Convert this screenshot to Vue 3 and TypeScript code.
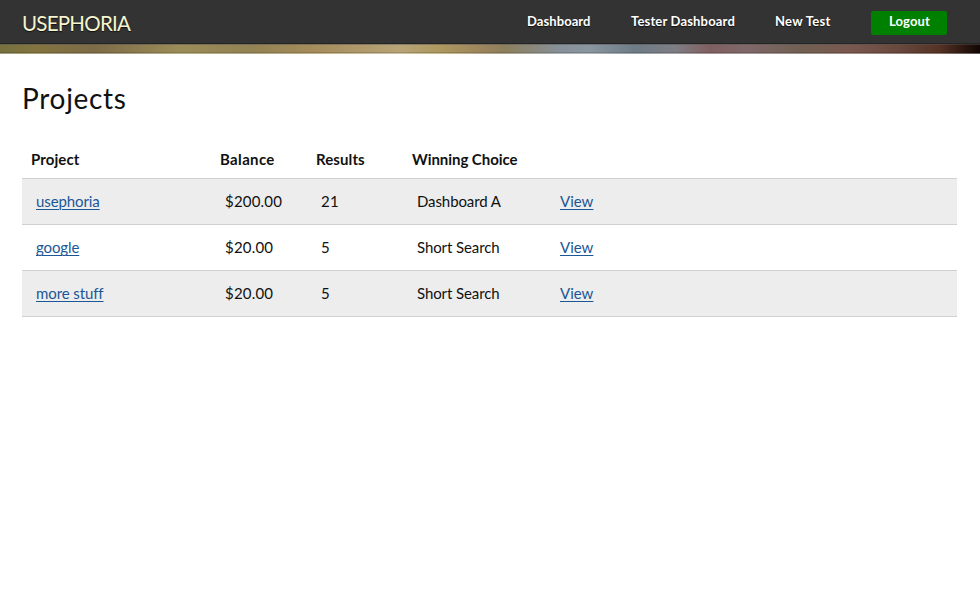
<script setup lang="ts">
interface NavItem {
  id: string
  label: string
}

interface Project {
  name: string
  balance: string
  results: number
  winner: string
}

const navItems: NavItem[] = [
  { id: 'dashboard', label: 'Dashboard' },
  { id: 'tester', label: 'Tester Dashboard' },
  { id: 'new-test', label: 'New Test' },
]

const projects: Project[] = [
  { name: 'usephoria', balance: '$200.00', results: 21, winner: 'Dashboard A' },
  { name: 'google', balance: '$20.00', results: 5, winner: 'Short Search' },
  { name: 'more stuff', balance: '$20.00', results: 5, winner: 'Short Search' },
]
</script>

<template>
  <div class="page">
    <header class="topbar">
      <a class="brand">USEPHORIA</a>
      <nav class="nav">
        <a v-for="item in navItems" :key="item.id" class="nav-link" :class="item.id">{{ item.label }}</a>
        <a class="logout">Logout</a>
      </nav>
    </header>
    <div class="ribbon"></div>

    <main class="content">
      <h1 class="title">Projects</h1>
      <div class="table" role="table">
        <div class="row head" role="row">
          <span role="columnheader">Project</span>
          <span class="balance-head" role="columnheader">Balance</span>
          <span role="columnheader">Results</span>
          <span class="winner-head" role="columnheader">Winning Choice</span>
        </div>
        <div v-for="project in projects" :key="project.name" class="row body-row" role="row">
          <span role="cell"><a class="link">{{ project.name }}</a></span>
          <span class="number" role="cell">{{ project.balance }}</span>
          <span class="number" role="cell">{{ project.results }}</span>
          <span class="winner" role="cell">{{ project.winner }}</span>
          <span role="cell"><a class="link view">View</a></span>
        </div>
      </div>
    </main>
  </div>
</template>

<style>
body {
  margin: 0;
  background: #fff;
}
</style>

<style scoped>
.page {
  min-height: 597px;
  color: #111;
  font-family: Lato, "Liberation Sans", sans-serif;
  font-size: 15px;
}

.topbar {
  display: flex;
  align-items: flex-start;
  justify-content: space-between;
  height: 43px;
  padding: 0 33px 0 22px;
  background: #333;
  border-bottom: 1px solid #252525;
}

.brand {
  margin-top: 11px;
  color: #f5f5cf;
  font-size: 20.5px;
  line-height: 25px;
  letter-spacing: -0.75px;
  text-shadow: 0 1px 1px #111;
}

.nav {
  display: flex;
  margin-top: 11px;
  color: #fff;
  font-size: 13px;
  font-weight: 700;
  letter-spacing: 0.12px;
  line-height: 21px;
  text-shadow: 0 1px 1px #111;
}

.nav-link {
  white-space: nowrap;
}

.dashboard {
  width: 104px;
  letter-spacing: 0.08px;
}

.tester {
  width: 144px;
  letter-spacing: 0.17px;
}

.new-test {
  width: 96px;
  letter-spacing: 0.3px;
}

.logout {
  box-sizing: border-box;
  width: 76px;
  height: 24px;
  padding-left: 1px;
  border-radius: 2px;
  background: #008000;
  text-align: center;
  text-shadow: none;
}

.ribbon {
  height: 9.5px;
  background:
    linear-gradient(#55555577 0 1px, transparent 1px 8px, #00000022 8px 9px, #ffffff55 9px),
    linear-gradient(90deg, #76713f 0, #82743f 35px, #7e6b48 95px, #9b8d58 180px, #938254 250px, #a48b5a 310px, #b8a478 400px, #ad985f 440px, #9b835d 485px, #8c7f5d 505px, #87909a 560px, #8a969f 590px, #6d7c86 635px, #7e7e84 675px, #815f60 710px, #80686a 745px, #716052 800px, #7a584f 850px, #68483d 900px, #543224 940px, #1d0d08 973px, #120704 980px);
}

.content {
  padding: 27.5px 23px 0 22px;
}

.title {
  margin: 0;
  height: 60px;
  font-size: 28px;
  font-weight: 400;
  letter-spacing: 0.7px;
  line-height: 34px;
}

.row {
  display: grid;
  grid-template-columns: 189px 96px 96px 143px 1fr;
  box-sizing: border-box;
  white-space: nowrap;
}

.head {
  height: 38px;
  padding: 8px 9px 0;
  border-bottom: 1px solid #d2d2d2;
  font-weight: 700;
  letter-spacing: 0.1px;
  line-height: 20px;
}

.balance-head {
  letter-spacing: 0.35px;
}

.winner-head {
  letter-spacing: -0.05px;
}

.body-row {
  height: 46.15px;
  padding: 0 14px;
  border-bottom: 1px solid #d0d0d0;
  line-height: 45px;
}

.body-row:nth-child(even) {
  background: #ededed;
}

.number {
  letter-spacing: 0.2px;
}

.winner {
  letter-spacing: -0.1px;
}

.link {
  color: #1b5796;
  letter-spacing: -0.1px;
  text-decoration: underline;
  text-decoration-thickness: 1px;
  text-underline-offset: 2px;
}

.view {
  letter-spacing: 0;
}
</style>
